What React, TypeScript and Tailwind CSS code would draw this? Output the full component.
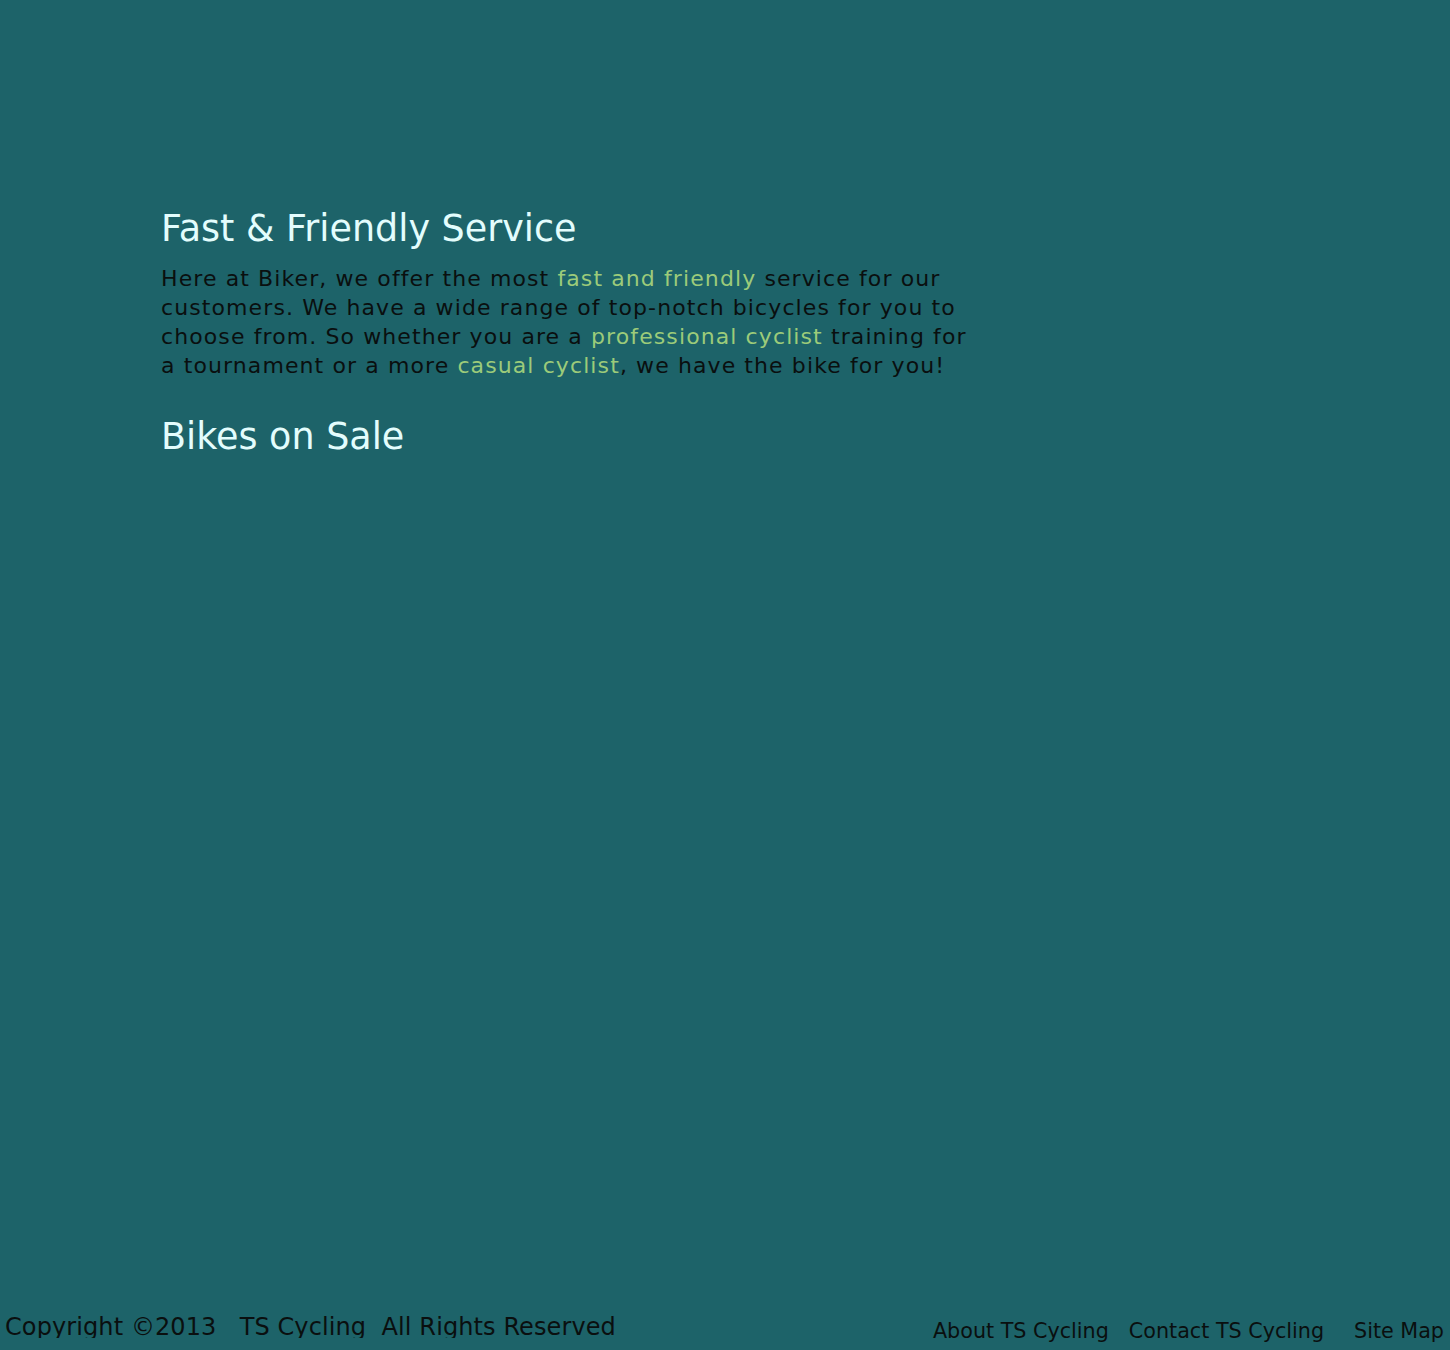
export default function App() {
  return (
    <div className="relative h-[1350px] w-full overflow-hidden bg-[#1d6369] font-['DejaVu_Sans',Verdana,sans-serif]">
      <main className="pl-[161px] pt-[206px]">
        <h1 className="text-[36.5px] leading-[46px] text-[#e3fdfd]">Fast &amp; Friendly Service</h1>
        <p className="mt-[12px] w-[815px] text-[22px] leading-[29px] tracking-[1.1px] text-[#0a0f0f]">
          Here at Biker, we offer the most <span className="text-[#9ccb7a]">fast and friendly</span> service for our
          customers. We have a wide range of top-notch bicycles for you to choose from. So whether you are a{' '}
          <span className="text-[#9ccb7a]">professional cyclist</span> training for a tournament or a more{' '}
          <span className="text-[#9ccb7a]">casual cyclist</span>, we have the bike for you!
        </p>
        <h2 className="mt-[34px] text-[36.5px] leading-[46px] text-[#e3fdfd]">Bikes on Sale</h2>
      </main>
      <footer className="absolute bottom-0 left-0 right-0 flex justify-between">
        <div className="mb-[12px] h-[26px] self-end overflow-hidden pl-[5px] text-[24px] leading-[30px] tracking-[0.1px] whitespace-pre text-[#0a0f0f]">
          Copyright ©2013   TS Cycling  All Rights Reserved
        </div>
        <nav className="flex gap-[20px] self-end pb-[6px] pr-[6px] text-[20.7px] leading-[26px] text-[#0a0f0f]">
          <a>About TS Cycling</a>
          <a>Contact TS Cycling</a>
          <a className="ml-[10px]">Site Map</a>
        </nav>
      </footer>
    </div>
  );
}
